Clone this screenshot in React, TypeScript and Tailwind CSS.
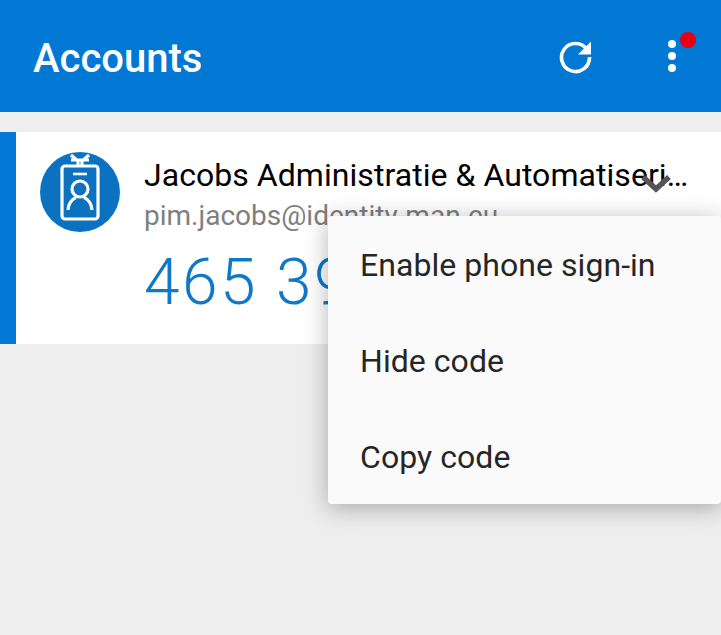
function BadgeIcon() {
  return (
    <svg viewBox="0 0 80 80" className="w-20 h-20 shrink-0">
      <circle cx="40" cy="40" r="40" fill="#0b72c2" />
      <g fill="none" stroke="#fff" strokeWidth="3.2">
        <rect x="22" y="14" width="36" height="53" rx="3" />
        <path d="M31 3 L38 9 V14 M49 3 L42 9 V14 M31 8 H49" />
        <path d="M33 22 H47" strokeWidth="2.6" />
        <circle cx="40" cy="37" r="8" />
        <path d="M28 58 C28 52 32 47 36 45.5 M52 58 C52 52 48 47 44 45.5" />
      </g>
    </svg>
  );
}

function RefreshIcon() {
  return (
    <svg viewBox="0 0 34 34" className="w-[34px] h-[34px]">
      <path d="M28 9.5 A14 14 0 1 0 30.5 17" fill="none" stroke="#fff" strokeWidth="3.6" />
      <path d="M32 1.5 V14.5 H19 Z" fill="#fff" />
    </svg>
  );
}

function App() {
  return (
    <div className="relative w-[721px] h-[635px] overflow-hidden bg-[#eeeeee] font-['Roboto',sans-serif]">
      <header className="flex items-center h-28 bg-[#0078d4] pl-[33px]">
        <h1 className="text-[40px] font-medium text-white flex-1 mt-[6px]">Accounts</h1>
        <div className="mr-[75px] mt-[1px]">
          <RefreshIcon />
        </div>
        <div className="relative mr-[45px] flex flex-col gap-1">
          <span className="w-2 h-2 rounded-full bg-white" />
          <span className="w-2 h-2 rounded-full bg-white" />
          <span className="w-2 h-2 rounded-full bg-white" />
          <span className="absolute -top-[8px] left-[12px] w-4 h-4 rounded-full bg-[#e60012]" />
        </div>
      </header>

      <div className="relative flex mt-5 h-[212px] bg-white border-l-16 border-[#0078d4] pl-6 pt-5">
        <BadgeIcon />
        <div className="ml-6 flex flex-col min-w-0">
          <div className="w-[546px] text-[32px] leading-[46px] text-black tracking-[0.05px] whitespace-nowrap">
            Jacobs Administratie &amp; Automatiseri…
          </div>
          <div className="text-[28px] leading-[36px] text-[#7f7f7f] whitespace-nowrap">pim.jacobs@identity-man.eu</div>
          <div className="text-[64px] leading-[84px] mt-[7px] font-light tracking-[2.5px] text-[#0f78c8] whitespace-nowrap">465 392</div>
        </div>
        <svg viewBox="0 0 32 20" className="absolute left-[624px] top-[42px] w-8 h-5">
          <path d="M3 3 L16 15 L29 3" fill="none" stroke="#555555" strokeWidth="5.5" />
        </svg>
      </div>

      {/* overflow menu */}
      <div className="absolute left-[328px] top-[216px] w-[393px] h-[288px] bg-[#fafafa] rounded-[4px] shadow-[0_4px_24px_rgba(0,0,0,0.3)] flex flex-col text-[32px] tracking-[0.05px] text-[#262626]">
        <div className="h-24 flex items-center pl-[32px] pt-[2px]">Enable phone sign-in</div>
        <div className="h-24 flex items-center pl-[32px] pt-[2px]">Hide code</div>
        <div className="h-24 flex items-center pl-[32px] pt-[2px]">Copy code</div>
      </div>
    </div>
  );
}

export default App;
